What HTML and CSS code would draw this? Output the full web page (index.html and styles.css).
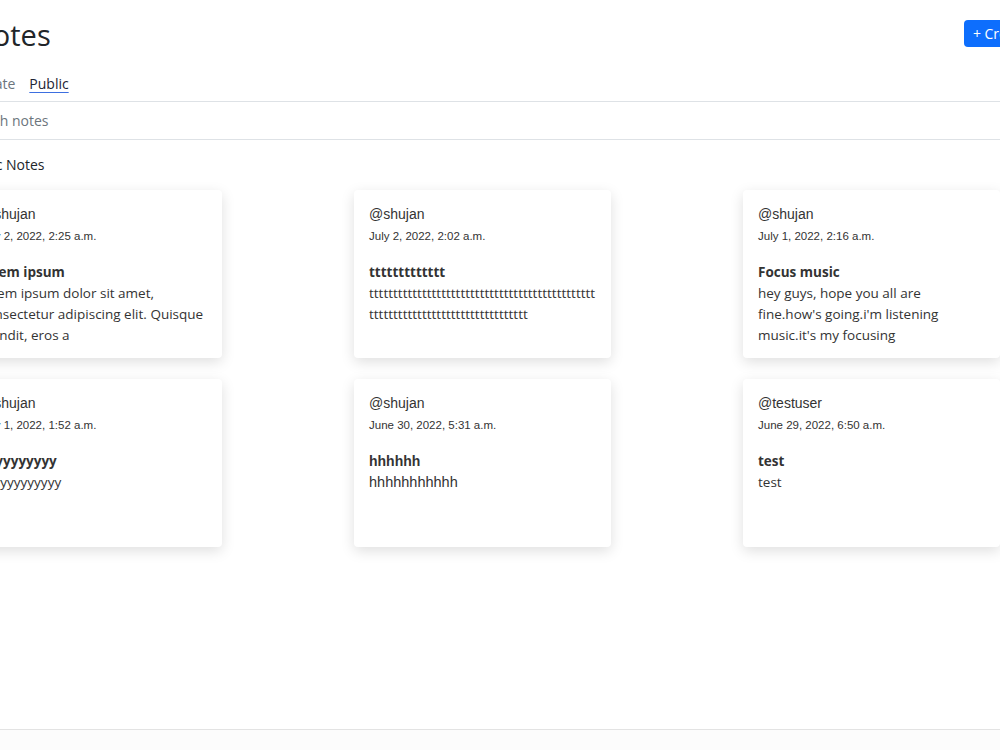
FILE: index.html
```html
<!DOCTYPE html>
<html lang="en">
<head>
    <meta charset="UTF-8">
    <meta name="viewport" content="width=device-width, initial-scale=1.0">
    <title>Notes</title>
    <link rel="stylesheet" href="styles.css">
</head>
<body>
    <div class="page">
        <header class="top">
            <h1>Notes</h1>
            <a href="#" class="btn-create">+ Create Note</a>
        </header>

        <nav class="tabs">
            <a href="#" class="tab">Private</a>
            <a href="#" class="tab active">Public</a>
        </nav>

        <div class="search">
            <input type="text" placeholder="Search notes">
        </div>

        <h2 class="section-title">Public Notes</h2>

        <div class="notes">
            <div class="note">
                <div class="user">@shujan</div>
                <div class="date">July 2, 2022, 2:25 a.m.</div>
                <h3>lorem ipsum</h3>
                <p>lorem ipsum dolor sit amet, consectetur adipiscing elit. Quisque blandit, eros a</p>
            </div>
            <div class="note">
                <div class="user">@shujan</div>
                <div class="date">July 2, 2022, 2:02 a.m.</div>
                <h3>ttttttttttttt</h3>
                <p class="long">tttttttttttttttttttttttttttttttttttttttttttttttttttttttttttttttttttttttttttttttt</p>
            </div>
            <div class="note">
                <div class="user">@shujan</div>
                <div class="date">July 1, 2022, 2:16 a.m.</div>
                <h3>Focus music</h3>
                <p>hey guys, hope you all are fine.how's going.i'm listening music.it's my focusing</p>
            </div>
            <div class="note">
                <div class="user">@shujan</div>
                <div class="date">July 1, 2022, 1:52 a.m.</div>
                <h3>yyyyyyyyyy</h3>
                <p>yyyyyyyyyyyy</p>
            </div>
            <div class="note">
                <div class="user">@shujan</div>
                <div class="date">June 30, 2022, 5:31 a.m.</div>
                <h3 class="plain">hhhhhh</h3>
                <p class="plain">hhhhhhhhhhh</p>
            </div>
            <div class="note">
                <div class="user">@testuser</div>
                <div class="date">June 29, 2022, 6:50 a.m.</div>
                <h3>test</h3>
                <p>test</p>
            </div>
        </div>
    </div>

    <footer class="footer"></footer>
</body>
</html>
```

FILE: styles.css
```css
body {
    margin: 0;
    font-family: "Open Sans", "Noto Sans", sans-serif;
    color: #212529;
    background-color: #fff;
    overflow-x: hidden;
}
.page {
    margin-left: -36px;
    width: 1108px;
}
.top {
    display: flex;
    justify-content: space-between;
    align-items: center;
    padding: 16px 0 0 7px;
}
.top h1 {
    margin: 0;
    font-size: 29px;
    font-weight: 400;
    line-height: 38px;
}
.btn-create {
    background-color: #0d6efd;
    color: white;
    text-decoration: none;
    font-size: 14px;
    line-height: 19px;
    padding: 4px 9px;
    border-radius: 4px;
    margin-top: -4px;
}
.tabs {
    display: flex;
    gap: 14px;
    padding: 19px 0 6px 6px;
    border-bottom: 1px solid #dee2e6;
}
.tab {
    font-size: 14px;
    line-height: 22px;
    color: #6c757d;
    text-decoration: none;
}
.tab.active {
    color: #1c2433;
    text-decoration: underline;
    text-decoration-color: #3d6fe0;
    text-underline-offset: 3px;
}
.search {
    border-bottom: 1px solid #dee2e6;
}
.search input {
    display: block;
    width: 100%;
    box-sizing: border-box;
    height: 37px;
    border: none;
    outline: none;
    padding: 0;
    font-family: inherit;
    font-size: 14px;
    color: #212529;
}
.search input::placeholder {
    color: #6c757d;
}
.section-title {
    margin: 14px 0 0 -1px;
    font-size: 14px;
    font-weight: 400;
    line-height: 22px;
}
.notes {
    display: grid;
    grid-template-columns: repeat(3, 257px);
    column-gap: 132px;
    row-gap: 21px;
    margin: 14px 0 0 1px;
}
.note {
    height: 168px;
    box-sizing: border-box;
    padding: 14px 15px 0;
    background-color: white;
    border-radius: 4px;
    box-shadow: 0 4px 14px rgba(0, 0, 0, 0.13);
}
.note .user {
    font-family: "Liberation Sans", Arial, sans-serif;
    font-size: 14px;
    line-height: 20px;
    color: #333;
}
.note .date {
    font-family: "Liberation Sans", Arial, sans-serif;
    font-size: 11.5px;
    line-height: 18px;
    margin-top: 3px;
    color: #333;
}
.note h3 {
    margin: 17px 0 0;
    font-size: 13.5px;
    font-weight: 700;
    line-height: 21px;
    color: #333;
}
.note p {
    margin: 0;
    font-size: 13.5px;
    line-height: 21px;
    color: #333;
}
.note .long {
    overflow-wrap: anywhere;
}
.note .plain {
    font-family: "Liberation Sans", Arial, sans-serif;
}
.note h3.plain {
    font-size: 14px;
}
.note p.plain {
    font-size: 14.5px;
}
.footer {
    margin-top: 182px;
    height: 20px;
    border-top: 1px solid #e3e3e3;
    background-color: #fcfcfc;
}
```
